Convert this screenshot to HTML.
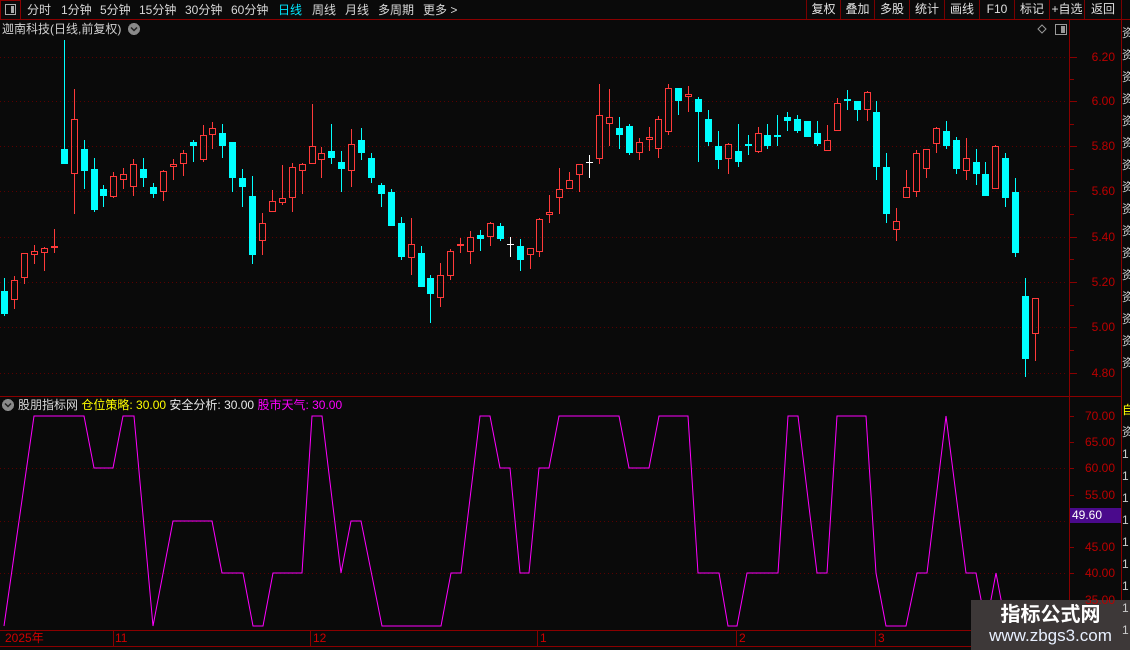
<!DOCTYPE html>
<html><head><meta charset="utf-8">
<style>
*{margin:0;padding:0;box-sizing:border-box}
body{width:1130px;height:650px;background:#0a0a0a;overflow:hidden;position:relative;font-family:"Liberation Sans","Noto Sans CJK SC",sans-serif;font-size:12px;color:#d0d0d0}
.abs{position:absolute;white-space:nowrap}
.tb{top:2px;font-size:12px;line-height:16px;color:#d8d8d8}
.rb{position:absolute;top:0;height:19px;border-left:1px solid #7a0000;text-align:center;line-height:19px;font-size:12px;color:#e0e0e0}
.ax{position:absolute;right:15px;font-size:12px;color:#bb0000;line-height:12px}
.dt{position:absolute;top:632px;font-size:12px;color:#d00000;line-height:13px}
</style></head><body>
<svg class="abs" style="left:0;top:0" width="1130" height="650" shape-rendering="crispEdges">
<line x1="0" y1="19.5" x2="1130" y2="19.5" stroke="#8a0000"/>
<rect x="0.5" y="0.5" width="20" height="19" fill="none" stroke="#8a0000"/>
<rect x="5.5" y="4.5" width="10" height="10" fill="none" stroke="#aaa"/>
<rect x="11" y="6" width="3" height="7" fill="#aaa"/>
<g stroke="#5a0000" stroke-dasharray="1,3">
<line x1="0" y1="57.5" x2="1068" y2="57.5"/><line x1="0" y1="101.5" x2="1068" y2="101.5"/>
<line x1="0" y1="146.5" x2="1068" y2="146.5"/><line x1="0" y1="191.5" x2="1068" y2="191.5"/>
<line x1="0" y1="237.5" x2="1068" y2="237.5"/><line x1="0" y1="282.5" x2="1068" y2="282.5"/>
<line x1="0" y1="327.5" x2="1068" y2="327.5"/><line x1="0" y1="373.5" x2="1068" y2="373.5"/>
<line x1="0" y1="468.5" x2="1068" y2="468.5"/><line x1="0" y1="521.5" x2="1068" y2="521.5"/>
<line x1="0" y1="573.5" x2="1068" y2="573.5"/>
</g>
<g stroke="#8a0000">
<line x1="1069.5" y1="20" x2="1069.5" y2="650"/>
<line x1="1121.5" y1="20" x2="1121.5" y2="650"/>
<line x1="0" y1="396.5" x2="1122" y2="396.5"/>
<line x1="0" y1="630.5" x2="1070" y2="630.5"/>
<line x1="0" y1="646.5" x2="1070" y2="646.5"/>
<line x1="113.5" y1="630" x2="113.5" y2="646"/><line x1="310.5" y1="630" x2="310.5" y2="646"/>
<line x1="537.5" y1="630" x2="537.5" y2="646"/><line x1="736.5" y1="630" x2="736.5" y2="646"/>
<line x1="875.5" y1="630" x2="875.5" y2="646"/>
<line x1="1070" y1="57.5" x2="1077" y2="57.5"/><line x1="1070" y1="79.5" x2="1074" y2="79.5"/>
<line x1="1070" y1="101.5" x2="1077" y2="101.5"/><line x1="1070" y1="124.5" x2="1074" y2="124.5"/>
<line x1="1070" y1="146.5" x2="1077" y2="146.5"/><line x1="1070" y1="169.5" x2="1074" y2="169.5"/>
<line x1="1070" y1="191.5" x2="1077" y2="191.5"/><line x1="1070" y1="214.5" x2="1074" y2="214.5"/>
<line x1="1070" y1="237.5" x2="1077" y2="237.5"/><line x1="1070" y1="259.5" x2="1074" y2="259.5"/>
<line x1="1070" y1="282.5" x2="1077" y2="282.5"/><line x1="1070" y1="305.5" x2="1074" y2="305.5"/>
<line x1="1070" y1="327.5" x2="1077" y2="327.5"/><line x1="1070" y1="350.5" x2="1074" y2="350.5"/>
<line x1="1070" y1="373.5" x2="1077" y2="373.5"/>
<line x1="1070" y1="416.5" x2="1074" y2="416.5"/><line x1="1070" y1="442.5" x2="1074" y2="442.5"/>
<line x1="1070" y1="468.5" x2="1074" y2="468.5"/><line x1="1070" y1="495.5" x2="1074" y2="495.5"/>
<line x1="1070" y1="547.5" x2="1074" y2="547.5"/><line x1="1070" y1="573.5" x2="1074" y2="573.5"/>
<line x1="1070" y1="600.5" x2="1074" y2="600.5"/>
</g>
<path fill="none" stroke="#00ffff" d="M4.5 278V316M64.5 40V164M84.5 140V189M94.5 158V212M103.5 185V207M143.5 158V187M153.5 183V198M193.5 140V162M222.5 124V158M232.5 142V192M242.5 169V207M252.5 176V264M331.5 124V164M341.5 151V192M361.5 128V160M371.5 153V183M381.5 183V207M391.5 189V226M401.5 217V260M421.5 246V287M430.5 275V323M480.5 230V251M500.5 223V241M520.5 239V271M619.5 117V149M629.5 124V155M678.5 88V115M698.5 97V162M708.5 110V146M718.5 131V169M738.5 124V167M748.5 135V155M767.5 124V149M777.5 115V146M787.5 112V131M797.5 115V133M807.5 121V137M817.5 121V146M847.5 90V110M857.5 101V121M876.5 101V180M886.5 153V223M946.5 121V149M956.5 137V174M976.5 149V185M985.5 162V196M1005.5 153V207M1015.5 178V257M1025.5 278V377"/>
<g fill="#00ffff">
<rect x="1" y="291" width="7" height="23"/><rect x="61" y="149" width="7" height="15"/><rect x="81" y="149" width="7" height="22"/><rect x="91" y="169" width="7" height="41"/><rect x="100" y="189" width="7" height="7"/><rect x="140" y="169" width="7" height="9"/><rect x="150" y="187" width="7" height="7"/><rect x="190" y="142" width="7" height="4"/><rect x="219" y="133" width="7" height="13"/><rect x="229" y="142" width="7" height="36"/><rect x="239" y="178" width="7" height="9"/><rect x="249" y="196" width="7" height="59"/><rect x="328" y="151" width="7" height="7"/><rect x="338" y="162" width="7" height="7"/><rect x="358" y="140" width="7" height="13"/><rect x="368" y="158" width="7" height="20"/><rect x="378" y="185" width="7" height="9"/><rect x="388" y="192" width="7" height="34"/><rect x="398" y="223" width="7" height="34"/><rect x="418" y="253" width="7" height="34"/><rect x="427" y="278" width="7" height="16"/><rect x="477" y="235" width="7" height="4"/><rect x="497" y="226" width="7" height="13"/><rect x="517" y="246" width="7" height="14"/><rect x="616" y="128" width="7" height="7"/><rect x="626" y="126" width="7" height="27"/><rect x="675" y="88" width="7" height="13"/><rect x="695" y="99" width="7" height="13"/><rect x="705" y="119" width="7" height="23"/><rect x="715" y="146" width="7" height="14"/><rect x="735" y="151" width="7" height="11"/><rect x="745" y="144" width="7" height="2"/><rect x="764" y="135" width="7" height="11"/><rect x="774" y="135" width="7" height="2"/><rect x="784" y="117" width="7" height="4"/><rect x="794" y="119" width="7" height="12"/><rect x="804" y="121" width="7" height="16"/><rect x="814" y="133" width="7" height="11"/><rect x="844" y="99" width="7" height="2"/><rect x="854" y="101" width="7" height="9"/><rect x="873" y="112" width="7" height="55"/><rect x="883" y="167" width="7" height="47"/><rect x="943" y="131" width="7" height="15"/><rect x="953" y="140" width="7" height="29"/><rect x="973" y="162" width="7" height="12"/><rect x="982" y="174" width="7" height="22"/><rect x="1002" y="158" width="7" height="40"/><rect x="1012" y="192" width="7" height="61"/><rect x="1022" y="296" width="7" height="63"/>
</g>
<path fill="none" stroke="#ff3a3a" d="M14.5 276V280M14.5 300V309M24.5 278V284M34.5 245V251M34.5 255V264M44.5 247V248M44.5 253V271M54.5 229V246M54.5 248V253M74.5 89V119M74.5 174V214M113.5 172V176M113.5 197V198M123.5 168V174M123.5 180V189M133.5 159V164M133.5 187V196M163.5 170V171M163.5 192V201M173.5 159V164M173.5 167V180M183.5 150V153M183.5 164V176M203.5 125V135M203.5 160V162M212.5 122V128M212.5 135V149M262.5 213V223M262.5 241V255M272.5 190V201M282.5 165V198M282.5 203V205M292.5 163V167M292.5 198V212M302.5 163V164M302.5 171V194M312.5 104V146M321.5 147V153M321.5 160V178M351.5 129V144M351.5 171V187M411.5 218V244M411.5 258V275M440.5 263V275M440.5 298V307M450.5 249V251M450.5 276V280M460.5 238V244M460.5 246V253M470.5 231V237M470.5 252V264M490.5 222V223M490.5 237V246M530.5 255V269M539.5 218V219M539.5 252V257M549.5 195V212M549.5 215V223M559.5 168V189M559.5 198V214M569.5 172V180M579.5 175V192M599.5 84V115M599.5 159V164M609.5 89V117M609.5 124V146M639.5 138V142M639.5 153V160M649.5 127V137M649.5 140V151M658.5 116V119M658.5 149V158M668.5 84V88M668.5 132V135M688.5 86V94M688.5 97V112M728.5 143V144M728.5 159V174M758.5 127V133M758.5 152V153M827.5 125V140M837.5 98V103M867.5 91V92M867.5 110V121M896.5 208V221M896.5 230V241M906.5 170V187M916.5 150V153M916.5 192V197M926.5 169V178M936.5 127V128M936.5 144V153M966.5 138V158M966.5 171V180M995.5 145V146M1035.5 334V361"/>
<g fill="none" stroke="#ff3a3a">
<rect x="11.5" y="280.5" width="6" height="19"/><rect x="21.5" y="253.5" width="6" height="24"/><rect x="31.5" y="251.5" width="6" height="3"/><rect x="41.5" y="248.5" width="6" height="4"/><rect x="51.5" y="246.5" width="6" height="1"/><rect x="71.5" y="119.5" width="6" height="54"/><rect x="110.5" y="176.5" width="6" height="20"/><rect x="120.5" y="174.5" width="6" height="5"/><rect x="130.5" y="164.5" width="6" height="22"/><rect x="160.5" y="171.5" width="6" height="20"/><rect x="170.5" y="164.5" width="6" height="2"/><rect x="180.5" y="153.5" width="6" height="10"/><rect x="200.5" y="135.5" width="6" height="24"/><rect x="209.5" y="128.5" width="6" height="6"/><rect x="259.5" y="223.5" width="6" height="17"/><rect x="269.5" y="201.5" width="6" height="10"/><rect x="279.5" y="198.5" width="6" height="4"/><rect x="289.5" y="167.5" width="6" height="30"/><rect x="299.5" y="164.5" width="6" height="6"/><rect x="309.5" y="146.5" width="6" height="17"/><rect x="318.5" y="153.5" width="6" height="6"/><rect x="348.5" y="144.5" width="6" height="26"/><rect x="408.5" y="244.5" width="6" height="13"/><rect x="437.5" y="275.5" width="6" height="22"/><rect x="447.5" y="251.5" width="6" height="24"/><rect x="457.5" y="244.5" width="6" height="1"/><rect x="467.5" y="237.5" width="6" height="14"/><rect x="487.5" y="223.5" width="6" height="13"/><rect x="527.5" y="248.5" width="6" height="6"/><rect x="536.5" y="219.5" width="6" height="32"/><rect x="546.5" y="212.5" width="6" height="2"/><rect x="556.5" y="189.5" width="6" height="8"/><rect x="566.5" y="180.5" width="6" height="8"/><rect x="576.5" y="164.5" width="6" height="10"/><rect x="596.5" y="115.5" width="6" height="43"/><rect x="606.5" y="117.5" width="6" height="6"/><rect x="636.5" y="142.5" width="6" height="10"/><rect x="646.5" y="137.5" width="6" height="2"/><rect x="655.5" y="119.5" width="6" height="29"/><rect x="665.5" y="88.5" width="6" height="43"/><rect x="685.5" y="94.5" width="6" height="2"/><rect x="725.5" y="144.5" width="6" height="14"/><rect x="755.5" y="133.5" width="6" height="18"/><rect x="824.5" y="140.5" width="6" height="10"/><rect x="834.5" y="103.5" width="6" height="27"/><rect x="864.5" y="92.5" width="6" height="17"/><rect x="893.5" y="221.5" width="6" height="8"/><rect x="903.5" y="187.5" width="6" height="10"/><rect x="913.5" y="153.5" width="6" height="38"/><rect x="923.5" y="149.5" width="6" height="19"/><rect x="933.5" y="128.5" width="6" height="15"/><rect x="963.5" y="158.5" width="6" height="12"/><rect x="992.5" y="146.5" width="6" height="42"/><rect x="1032.5" y="298.5" width="6" height="35"/>
</g>
<path stroke="#ffffff" d="M510.5 237V257M589.5 155V178"/>
<rect x="507" y="244" width="7" height="1" fill="#fff"/><rect x="586" y="162" width="7" height="1" fill="#fff"/>
<polyline fill="none" stroke="#ff00ff" stroke-width="1" shape-rendering="auto" points="4,626 34,416 84,416 94,468 113,468 123,416 134,416 153,626 173,521 212,521 222,573 243,573 253,626 263,626 273,573 302,573 312,416 322,416 341,573 351,521 361,521 382,626 441,626 451,573 461,573 480,416 490,416 500,468 510,468 520,573 529,573 539,468 549,468 559,416 619,416 629,468 649,468 659,416 688,416 698,573 719,573 728,626 737,626 747,573 778,573 788,416 798,416 817,573 827,573 837,416 866,416 876,573 886,626 906,626 917,573 927,573 946,416 966,573 976,573 986,626 996,573 1006,626 1012,640"/>
<circle cx="134" cy="29" r="6" fill="#8a8a8a"/>
<path d="M131 27.5l3 3 3-3" fill="none" stroke="#222" stroke-width="1.5" shape-rendering="auto"/>
<circle cx="8" cy="405" r="6" fill="#8a8a8a"/>
<path d="M5 403.5l3 3 3-3" fill="none" stroke="#222" stroke-width="1.5" shape-rendering="auto"/>
<path d="M1042 25l4 4-4 4-4-4z" fill="none" stroke="#999" shape-rendering="auto"/>
<rect x="1055.5" y="24.5" width="11" height="10" fill="none" stroke="#999"/>
<rect x="1061" y="26" width="4" height="7" fill="#999"/>
<rect x="1070" y="508" width="51" height="15" fill="#4a0a8c"/>
<rect x="971" y="600" width="159" height="50" fill="#3d3838"/>
</svg>

<div class="abs tb" style="left:27px">分时</div>
<div class="abs tb" style="left:61px">1分钟</div>
<div class="abs tb" style="left:100px">5分钟</div>
<div class="abs tb" style="left:139px">15分钟</div>
<div class="abs tb" style="left:185px">30分钟</div>
<div class="abs tb" style="left:231px">60分钟</div>
<div class="abs tb" style="left:278px;color:#00e8ff">日线</div>
<div class="abs tb" style="left:312px">周线</div>
<div class="abs tb" style="left:345px">月线</div>
<div class="abs tb" style="left:378px">多周期</div>
<div class="abs tb" style="left:423px">更多 &gt;</div>

<div class="rb" style="left:806px;width:34px">复权</div>
<div class="rb" style="left:840px;width:34px">叠加</div>
<div class="rb" style="left:874px;width:35px">多股</div>
<div class="rb" style="left:909px;width:35px">统计</div>
<div class="rb" style="left:944px;width:35px">画线</div>
<div class="rb" style="left:979px;width:35px">F10</div>
<div class="rb" style="left:1014px;width:35px">标记</div>
<div class="rb" style="left:1049px;width:35px">+自选</div>
<div class="rb" style="left:1084px;width:38px;border-right:1px solid #7a0000">返回</div>

<div class="abs" style="left:2px;top:21px;font-size:12px;line-height:16px;color:#d0d0d0">迦南科技(日线,前复权)</div>

<div class="ax" style="top:51px">6.20</div>
<div class="ax" style="top:95px">6.00</div>
<div class="ax" style="top:140px">5.80</div>
<div class="ax" style="top:185px">5.60</div>
<div class="ax" style="top:231px">5.40</div>
<div class="ax" style="top:276px">5.20</div>
<div class="ax" style="top:321px">5.00</div>
<div class="ax" style="top:367px">4.80</div>

<div class="ax" style="top:410px">70.00</div>
<div class="ax" style="top:436px">65.00</div>
<div class="ax" style="top:462px">60.00</div>
<div class="ax" style="top:489px">55.00</div>
<div class="ax" style="top:541px">45.00</div>
<div class="ax" style="top:567px">40.00</div>
<div class="ax" style="top:594px">35.00</div>
<div class="abs" style="left:1072px;top:509px;font-size:12px;line-height:13px;color:#fff">49.60</div>

<div class="abs" style="left:18px;top:398px;font-size:12px;line-height:15px">
<span style="color:#d8d8d8">股朋指标网</span>
<span style="color:#ffff00">仓位策略: 30.00</span>
<span style="color:#e8e8e8">安全分析: 30.00</span>
<span style="color:#ff00ff">股市天气: 30.00</span></div>

<div class="dt" style="left:5px">2025年</div>
<div class="dt" style="left:115px">11</div>
<div class="dt" style="left:313px">12</div>
<div class="dt" style="left:540px">1</div>
<div class="dt" style="left:739px">2</div>
<div class="dt" style="left:878px">3</div>

<div class="abs" style="left:1122px;top:22px;width:8px;overflow:hidden;font-size:12px;line-height:22px;color:#ccc;white-space:normal">资<br>资<br>资<br>资<br>资<br>资<br>资<br>资<br>资<br>资<br>资<br>资<br>资<br>资<br>资<br>资</div>
<div class="abs" style="left:1122px;top:399px;width:8px;overflow:hidden;font-size:12px;line-height:22px;color:#ccc;white-space:normal"><span style="color:#ff0">自</span><br>资<br>1<br>1<br>1<br>1<br>1<br>1<br>1<br>1<br>1</div>

<div class="abs" style="left:971px;top:601px;width:159px;text-align:center;font-size:20px;font-weight:bold;color:#fff;line-height:24px;font-family:'Noto Sans CJK SC',sans-serif">指标公式网</div>
<div class="abs" style="left:971px;top:625px;width:159px;text-align:center;font-size:17px;color:#e8f0ff;line-height:21px">www.zbgs3.com</div>
</body></html>
